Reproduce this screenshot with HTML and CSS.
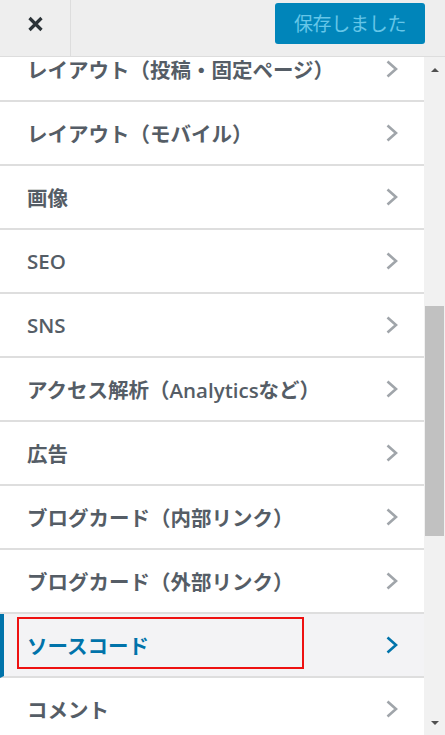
FILE: index.html
```html
<!DOCTYPE html>
<html lang="ja">
<head>
<meta charset="utf-8">
<link rel="stylesheet" href="styles.css">
</head>
<body>
<div class="app">
  <header class="header">
    <div class="close">
      <svg width="17" height="16" viewBox="0 0 17 16"><path d="M2.5 2 L14.5 14 M14.5 2 L2.5 14" stroke="#2c3338" stroke-width="3.2" stroke-linecap="butt"/></svg>
    </div>
    <div class="spacer"></div>
    <button class="save">保存しました</button>
  </header>
  <div class="main">
    <div class="viewport">
      <ul class="list">
        <li class="row"><span>レイアウト（投稿・固定ページ）</span><svg class="chev" width="12" height="18" viewBox="0 0 12 18"><polyline points="1.5,1.5 10,9 1.5,16.5" fill="none" stroke="currentColor" stroke-width="2.6"/></svg></li>
        <li class="row"><span>レイアウト（モバイル）</span><svg class="chev" width="12" height="18" viewBox="0 0 12 18"><polyline points="1.5,1.5 10,9 1.5,16.5" fill="none" stroke="currentColor" stroke-width="2.6"/></svg></li>
        <li class="row"><span>画像</span><svg class="chev" width="12" height="18" viewBox="0 0 12 18"><polyline points="1.5,1.5 10,9 1.5,16.5" fill="none" stroke="currentColor" stroke-width="2.6"/></svg></li>
        <li class="row"><span>SEO</span><svg class="chev" width="12" height="18" viewBox="0 0 12 18"><polyline points="1.5,1.5 10,9 1.5,16.5" fill="none" stroke="currentColor" stroke-width="2.6"/></svg></li>
        <li class="row"><span>SNS</span><svg class="chev" width="12" height="18" viewBox="0 0 12 18"><polyline points="1.5,1.5 10,9 1.5,16.5" fill="none" stroke="currentColor" stroke-width="2.6"/></svg></li>
        <li class="row"><span>アクセス解析（Analyticsなど）</span><svg class="chev" width="12" height="18" viewBox="0 0 12 18"><polyline points="1.5,1.5 10,9 1.5,16.5" fill="none" stroke="currentColor" stroke-width="2.6"/></svg></li>
        <li class="row"><span>広告</span><svg class="chev" width="12" height="18" viewBox="0 0 12 18"><polyline points="1.5,1.5 10,9 1.5,16.5" fill="none" stroke="currentColor" stroke-width="2.6"/></svg></li>
        <li class="row"><span>ブログカード（内部リンク）</span><svg class="chev" width="12" height="18" viewBox="0 0 12 18"><polyline points="1.5,1.5 10,9 1.5,16.5" fill="none" stroke="currentColor" stroke-width="2.6"/></svg></li>
        <li class="row"><span>ブログカード（外部リンク）</span><svg class="chev" width="12" height="18" viewBox="0 0 12 18"><polyline points="1.5,1.5 10,9 1.5,16.5" fill="none" stroke="currentColor" stroke-width="2.6"/></svg></li>
        <li class="row active"><span>ソースコード</span><svg class="chev" width="12" height="18" viewBox="0 0 12 18"><polyline points="1.5,1.5 10,9 1.5,16.5" fill="none" stroke="currentColor" stroke-width="2.6"/></svg><div class="mark"></div></li>
        <li class="row"><span>コメント</span><svg class="chev" width="12" height="18" viewBox="0 0 12 18"><polyline points="1.5,1.5 10,9 1.5,16.5" fill="none" stroke="currentColor" stroke-width="2.6"/></svg></li>
      </ul>
    </div>
    <div class="scrollbar">
      <div class="arrow up"></div>
      <div class="track"><div class="thumb"></div></div>
      <div class="arrow down"></div>
    </div>
  </div>
</div>
</body>
</html>
```

FILE: styles.css
```css
* { box-sizing: border-box; }
html, body {
  margin: 0;
  padding: 0;
  width: 445px;
  height: 735px;
  overflow: hidden;
  background: #fff;
  font-family: "Open Sans", "Noto Sans CJK JP", sans-serif;
}
.app {
  display: flex;
  flex-direction: column;
  height: 735px;
}
.header {
  height: 57px;
  flex: none;
  display: flex;
  align-items: flex-start;
  background: #eeeeee;
  border-bottom: 1px solid #dddddd;
}
.close {
  width: 71px;
  height: 56px;
  border-right: 1px solid #dddddd;
  display: flex;
  align-items: center;
  justify-content: center;
  padding-bottom: 9px;
}
.spacer { flex: 1; }
.save {
  margin: 3px 20px 0 0;
  width: 150px;
  height: 41px;
  border: none;
  border-radius: 3px;
  background: #0085ba;
  color: #66c6e8;
  font-family: "Noto Sans CJK JP", sans-serif;
  font-size: 19px;
  font-weight: 400;
  padding: 0 0 2px 0;
  letter-spacing: -0.3px;
}
.main {
  flex: 1;
  display: flex;
  min-height: 0;
}
.viewport {
  width: 424px;
  overflow: hidden;
  background: #fff;
}
.list {
  list-style: none;
  margin: -19px 0 0 0;
  padding: 0;
}
.row {
  position: relative;
  height: 64px;
  display: flex;
  align-items: center;
  justify-content: space-between;
  padding: 0 26px 1px 27px;
  border-bottom: 2px solid #dedede;
  color: #555d66;
  font-size: 20.5px;
  font-weight: 600;
  letter-spacing: 0;
}
.row .chev {
  color: #a0a5aa;
  flex: none;
}
.row.active {
  background: #f3f3f5;
  color: #0073aa;
  border-left: 4px solid #0073aa;
  padding-left: 23px;
}
.row.active .chev { color: #0073aa; }
.mark {
  position: absolute;
  left: 13px;
  top: 3px;
  width: 287px;
  height: 52px;
  border: 2px solid #ee1111;
}
.scrollbar {
  width: 21px;
  background: #f1f1f1;
  display: flex;
  flex-direction: column;
}
.arrow {
  height: 17px;
  flex: none;
  display: flex;
  align-items: center;
  justify-content: center;
}
.arrow::before {
  content: "";
  width: 0;
  height: 0;
  border-left: 4px solid transparent;
  border-right: 4px solid transparent;
}
.arrow.up::before { border-bottom: 4px solid #505050; margin-top: 8px; }
.arrow.down::before { border-top: 4px solid #505050; margin-top: -8px; }
.track {
  flex: 1;
  padding: 232px 1px 0 1px;
}
.thumb {
  height: 230px;
  background: #c1c1c1;
}
```
